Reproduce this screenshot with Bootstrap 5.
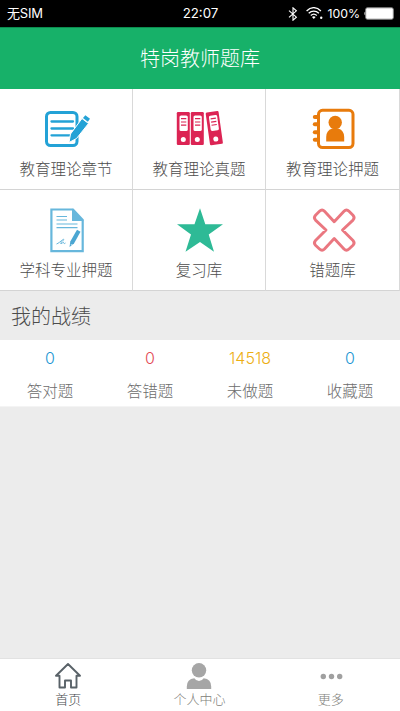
<!DOCTYPE html>
<html lang="zh-CN">
<head>
<meta charset="utf-8">
<meta name="viewport" content="width=device-width, initial-scale=1">
<title>特岗教师题库</title>
<link rel="stylesheet" href="https://cdn.jsdelivr.net/npm/bootstrap@5.3.0/dist/css/bootstrap.min.css">
<style>
  body { font-family: "Noto Sans CJK SC", sans-serif; font-weight: 300; background: #ececec; color: #4c4c4c; height: 711px; overflow: hidden; }
  .status-bar { height: 27px; background: #000; font-family: "Inter", "Noto Sans CJK SC", sans-serif; font-weight: 400; font-size: 12.3px; line-height: 27px; padding: 0 6px 0 7px; }
  .status-side { flex: 1 1 0; }
  .status-side svg { flex: none; }
  .carrier { font-size: 13px; letter-spacing: -.2px; }
  .clock { font-size: 13.300px; }
  .title-bar { height: 62px; background: #17b169; font-size: 20px; line-height: 60px; border-top: 1px solid #0c8c4f; }
  .tiles { display: grid; grid-template-columns: 133px 133px 134px; grid-template-rows: 101px 101px; }
  .tile { border-right: 1px solid #d9d9d9; border-bottom: 1px solid #d4d4d4; font-size: 15.5px; line-height: 24px; padding-top: 15px; }
  .tile svg { width: 60px; height: 50px; margin-bottom: 2px; flex: none; }
  .tile-low { padding-top: 16px; }
  .tile-low svg { margin-bottom: 1px; }
  .section-title { height: 49px; font-size: 20px; line-height: 49px; padding-left: 11px; }
  .stats { height: 67px; font-size: 15.5px; color: #6c6c6c; border-bottom: 1px solid #f4f4f4; }
  .stat-value { font-family: "Inter", sans-serif; font-size: 16px; font-weight: 300; line-height: 24px; padding-top: 6px; }
  .stat-label { line-height: 24px; padding-top: 8px; }
  .c-blue { color: #2497d3; } .c-red { color: #e34b55; } .c-gold { color: #edae12; }
  .tab-bar { height: 53px; font-size: 13px; line-height: 18px; color: #80807a; border-top: 1px solid #e2e2e2; padding: 3px 3px 0; }
  .tab-bar svg { width: 30px; height: 28px; }
  .tab-bar .col { padding-right: 1px; }
  .tab-on { color: #45494c; }
</style>
</head>
<body class="d-flex flex-column">
<div class="status-bar d-flex text-white">
  <div class="status-side carrier">无SIM</div>
  <div class="clock">22:07</div>
  <div class="status-side d-flex justify-content-end align-items-center">
    <svg width="10" height="14" viewBox="0 0 10 14" fill="none" stroke="#fff" stroke-width="1.1"><path d="M1 3.7 8.4 10.2 5 13.2V.8L8.4 3.8 1 10.3"/></svg>
    <svg class="ms-2" width="17" height="13" viewBox="0 0 17 13" fill="none" stroke="#fff" stroke-width="1.3"><path d="M.6 4C5-.5 10.500-.5 14.900 4M2.700 6.300c3-3 7.200-3 10.200 0M4.800 8.500c1.800-1.700 4.200-1.700 6 0"/><path d="M6 9.900q1.800-1.300 3.600 0L7.800 12z" fill="#fff" stroke="none"/><circle cx="15.200" cy="10.800" r="1.200" fill="#fff" stroke="none"/></svg>
    <span class="ms-1">100%</span>
    <svg class="ms-1" width="30" height="13" viewBox="0 0 30 13"><path d="M2 4.500Q0 4.500 0 6.500t2 2z" fill="#999"/><rect x="1.700" y=".8" width="27.600" height="11.400" rx="1.600" fill="#fff" stroke="#888" stroke-width="1"/></svg>
  </div>
</div>
<header class="title-bar text-white text-center">特岗教师题库</header>
<main class="flex-grow-1">
  <div class="tiles">
    <div class="tile bg-white d-flex flex-column align-items-center">
      <svg viewBox="36 16 60 50"><rect x="46.500" y="24.500" width="30.500" height="33" rx="4" fill="none" stroke="#23a2d6" stroke-width="3"/><path d="M51.500 33.500h21.500M51.500 40.500h21.500M51.500 47.300h19" stroke="#23a2d6" stroke-width="2.300" stroke-linecap="round"/><path d="M69 54.500 70.500 46 82 30.500 88.500 35.500 76.500 50.500z" fill="#23a2d6" stroke="#fff" stroke-width="1"/><path d="m83 30 2.300-2.800 4.700 3.500-2.200 3z" fill="#23a2d6"/></svg>
      <div>教育理论章节</div>
    </div>
    <div class="tile bg-white d-flex flex-column align-items-center">
      <svg viewBox="36 16 60 50">
        <g id="binder"><rect x="43.800" y="24" width="13" height="33" rx="1.200" fill="#dc2454"/><rect x="46.500" y="27.500" width="8.300" height="15.500" rx="1.600" fill="#fff"/><path d="M48 30.700h5.300M48 34h5.300M48 37.200h5.300" stroke="#dc2454" stroke-width="1.200"/><circle cx="50.300" cy="51.500" r="2.500" fill="#fff"/></g>
        <use href="#binder" x="14"/><use href="#binder" transform="translate(31 -.3) rotate(-8 50.300 40.500)"/>
      </svg>
      <div>教育理论真题</div>
    </div>
    <div class="tile bg-white d-flex flex-column align-items-center">
      <svg viewBox="36 16 60 50"><rect x="51.500" y="22.300" width="34.500" height="37.300" rx="4" fill="none" stroke="#e87b0c" stroke-width="3"/><g fill="#e87b0c"><rect x="45.800" y="27" width="7" height="4" rx="2"/><rect x="45.800" y="34.300" width="7" height="4" rx="2"/><rect x="45.800" y="42.200" width="7" height="4" rx="2"/><rect x="45.800" y="49.800" width="7" height="4" rx="2"/><circle cx="68.200" cy="34.500" r="6.700"/><path d="M59.200 53.500v-4.500q0-6.500 5.800-8.500h6.400q5.800 2 5.800 8.500v4.500z"/></g></svg>
      <div>教育理论押题</div>
    </div>
    <div class="tile tile-low bg-white d-flex flex-column align-items-center">
      <svg viewBox="36 16 60 50"><path d="M51.400 19.500H73L82.700 30v31.200H51.400z" fill="none" stroke="#67b7dc" stroke-width="2.200"/><path d="M72 18.500 83.800 31H72z" fill="#67b7dc"/><path d="M56.500 26.500h10.500M56.500 30h10.500M56.500 34h21M56.500 37.600h21" stroke="#67b7dc" stroke-width="1.200"/><path d="m69.500 57 .8-5.500 6.700-11.800 3.500 2L74 53.500z" fill="#4ba6d2"/><path d="m70.800 54.500 2.500 1" stroke="#fff" stroke-width=".7"/><path d="M56.500 54c3-1 7.500-6 7.200-4.500s-4.700 4-2.700 4 2.300-2.300 2.500-1 1.500 1.300 2 .5" fill="none" stroke="#67b7dc"/></svg>
      <div>学科专业押题</div>
    </div>
    <div class="tile tile-low bg-white d-flex flex-column align-items-center">
      <svg viewBox="36 16 60 50"><path d="m67 18.300 5.300 16H90L75.700 44.500 81 61.700 67 52 52.500 61.700 58 44.500 44 34.300h17.500z" fill="#2eba96"/></svg>
      <div>复习库</div>
    </div>
    <div class="tile tile-low bg-white d-flex flex-column align-items-center">
      <svg viewBox="36 16 60 50"><path d="M67.200 31.800 77 21.300q2.400-2.600 5 0l4 4q2.200 2.400 0 4.800L75.500 40 86 50.500q2.200 2.400 0 4.800l-4 3.700q-2.600 2.400-5 0L67.200 48.500 57.500 59q-2.400 2.400-5 0l-4-3.700q-2.200-2.400 0-4.800L59 40 48.500 30.100q-2.200-2.400 0-4.800l4-4q2.600-2.600 5 0z" fill="none" stroke="#ea7780" stroke-width="2.900" stroke-linejoin="round"/></svg>
      <div>错题库</div>
    </div>
  </div>
  <div class="section-title">我的战绩</div>
  <div class="stats bg-white row g-0 text-center">
    <div class="col"><div class="stat-value c-blue">0</div><div class="stat-label">答对题</div></div>
    <div class="col"><div class="stat-value c-red">0</div><div class="stat-label">答错题</div></div>
    <div class="col"><div class="stat-value c-gold">14518</div><div class="stat-label">未做题</div></div>
    <div class="col"><div class="stat-value c-blue">0</div><div class="stat-label">收藏题</div></div>
  </div>
</main>
<nav class="tab-bar bg-white row g-0 text-center">
  <div class="col tab-on d-flex flex-column align-items-center"><svg viewBox="0 0 30 28" fill="none" stroke="#596268" stroke-width="1.900" stroke-linejoin="round"><path d="M15 2 3 13.800H6.500V25.500h5.500v-7h6v7h5.500V13.800H27z"/></svg><div>首页</div></div>
  <div class="col d-flex flex-column align-items-center"><svg viewBox="0 0 30 28" fill="#a6a6a6"><ellipse cx="15" cy="8.300" rx="7.200" ry="7.300"/><path d="M2.800 27v-2.500q0-7.500 7.500-8.300 1.800 2.800 4.700 2.800t4.700-2.800q7.500.8 7.500 8.300V27z"/></svg><div>个人中心</div></div>
  <div class="col d-flex flex-column align-items-center"><svg viewBox="0 0 30 28" fill="#a0a0a0"><circle cx="7.300" cy="14.500" r="2.700"/><circle cx="15.500" cy="14.500" r="2.700"/><circle cx="23.700" cy="14.500" r="2.700"/></svg><div>更多</div></div>
</nav>
<script src="https://cdn.jsdelivr.net/npm/bootstrap@5.3.0/dist/js/bootstrap.bundle.min.js"></script>
</body>
</html>
